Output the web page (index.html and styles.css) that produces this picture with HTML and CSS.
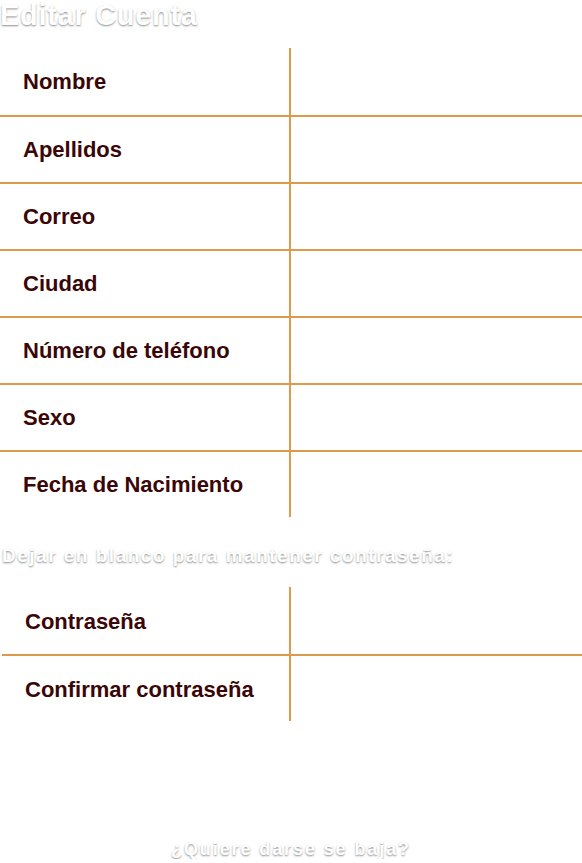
FILE: index.html
```html
<!DOCTYPE html>
<html lang="es">
<head>
<meta charset="utf-8">
<title>Editar Cuenta</title>
<link rel="stylesheet" href="styles.css">
</head>
<body>
<h1 class="title">Editar Cuenta</h1>
<div class="form-table">
  <div class="row"><div class="label">Nombre</div><div class="field"></div></div>
  <div class="row"><div class="label">Apellidos</div><div class="field"></div></div>
  <div class="row"><div class="label">Correo</div><div class="field"></div></div>
  <div class="row"><div class="label">Ciudad</div><div class="field"></div></div>
  <div class="row"><div class="label">Número de teléfono</div><div class="field"></div></div>
  <div class="row"><div class="label">Sexo</div><div class="field"></div></div>
  <div class="row"><div class="label">Fecha de Nacimiento</div><div class="field"></div></div>
</div>
<p class="note">Dejar en blanco para mantener contraseña:</p>
<div class="form-table form-table--pass">
  <div class="row"><div class="label">Contraseña</div><div class="field"></div></div>
  <div class="row"><div class="label">Confirmar contraseña</div><div class="field"></div></div>
</div>
<p class="unsubscribe">¿Quiere darse se baja?</p>
</body>
</html>
```
FILE: styles.css
```css
html, body {
  margin: 0;
  padding: 0;
  background: #ffffff;
}
body {
  font-family: "Liberation Sans", Arial, sans-serif;
  width: 582px;
}
.title {
  margin: 0;
  padding-top: 1px;
  font-size: 29px;
  line-height: 28px;
  font-weight: 700;
  letter-spacing: 0.7px;
  color: #ffffff;
  text-shadow: 0 1px 2px rgba(0, 0, 0, 0.45);
}
.form-table {
  margin-top: 19px;
}
.row {
  display: grid;
  grid-template-columns: 291px 1fr;
  height: 67px;
  box-sizing: border-box;
}
.row + .row {
  border-top: 2px solid #dc9a4a;
}
.label {
  display: flex;
  align-items: center;
  padding-left: 23px;
  border-right: 2px solid #dc9a4a;
  font-size: 22px;
  font-weight: 700;
  color: #3a0606;
}
.note {
  margin: 29px 0 21px 2px;
  font-size: 19px;
  line-height: 20px;
  font-weight: 700;
  letter-spacing: 1.5px;
  color: #ffffff;
  text-shadow: 0 1px 2px rgba(0, 0, 0, 0.45);
}
.form-table--pass {
  margin-top: 0;
  margin-left: 2px;
}
.form-table--pass .row {
  grid-template-columns: 289px 1fr;
}
.form-table--pass .label {
  padding-top: 3px;
}
.unsubscribe {
  margin: 118px 0 0 0;
  text-align: center;
  font-size: 18px;
  line-height: 20px;
  font-weight: 700;
  letter-spacing: 1.9px;
  color: #ffffff;
  text-shadow: 0 1px 2px rgba(0, 0, 0, 0.45);
}
```
